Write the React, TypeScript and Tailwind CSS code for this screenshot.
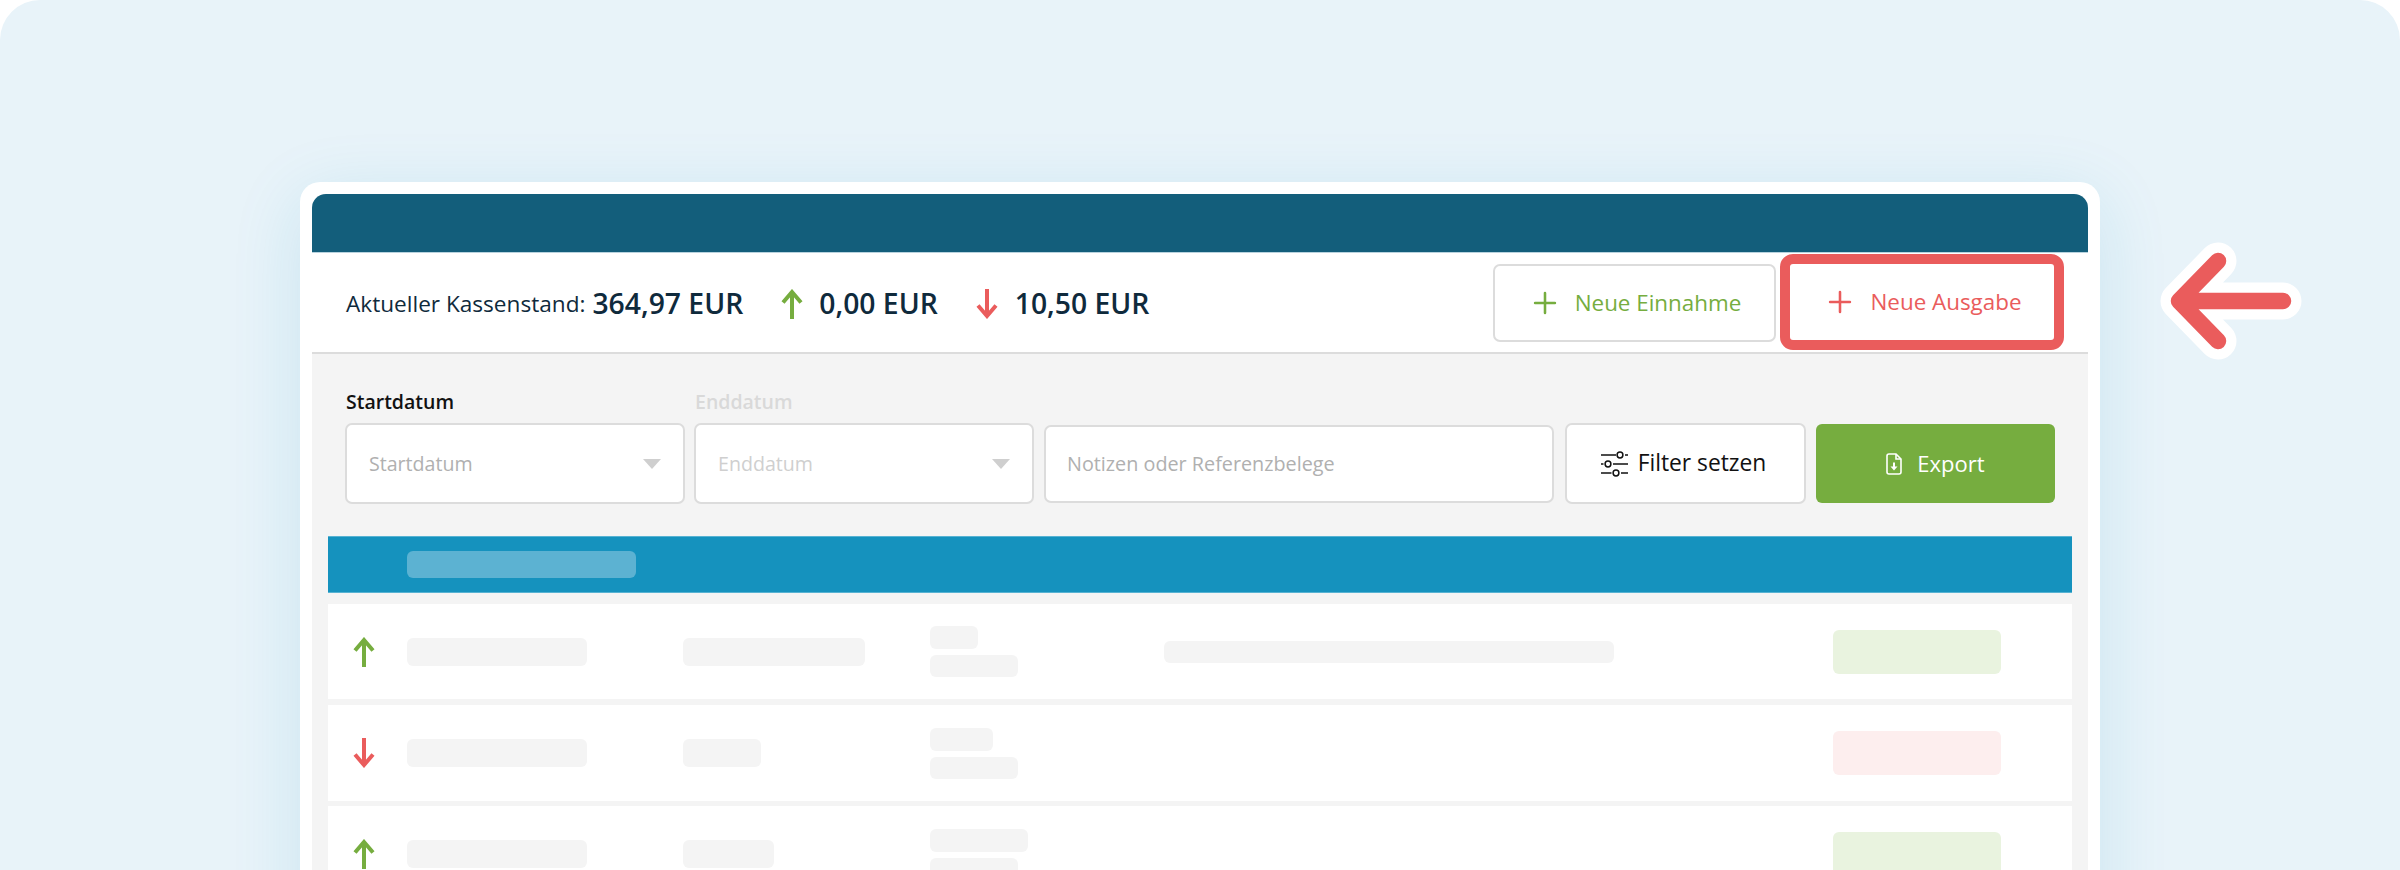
import { Plus } from "lucide-react";

const font = "font-['Open_Sans',sans-serif]";

const rows = [
  { dir: "up", height: "h-[95px] mb-[1px]", second: "w-[182px]", first: "w-[48px]", note: true, amount: "bg-[#e9f3df]" },
  { dir: "down", height: "h-[96px]", second: "w-[78px]", first: "w-[63px]", note: false, amount: "bg-[#fdeeee]" },
  { dir: "up", height: "h-[96px]", second: "w-[91px]", first: "w-[98px]", note: false, amount: "bg-[#e9f3df]" },
];

function Move({ dir, className }: { dir: string; className?: string }) {
  return (
    <svg
      width="22"
      height="30"
      viewBox="0 0 22 30"
      fill="none"
      stroke={dir === "up" ? "#76ad3f" : "#ea5c5c"}
      strokeWidth="4"
      className={className}
    >
      {dir === "up" ? <path d="M11 30V3M2 13.5L11 3L20 13.5" /> : <path d="M11 0V27M2 16.5L11 27L20 16.5" />}
    </svg>
  );
}

function FilterIcon() {
  return (
    <svg width="29" height="26" viewBox="0 0 29 26" fill="none" stroke="#111" strokeWidth="1.5" className="mr-[9px]">
      <path d="M1 4h15M25 4h3M1 13h2.500M13 13h15M1 22h10.500M21 22h7" />
      <circle cx="20" cy="4" r="2.900" />
      <circle cx="8" cy="13" r="2.900" />
      <circle cx="16" cy="22" r="2.900" />
    </svg>
  );
}

function ExportIcon() {
  return (
    <svg width="16" height="22" viewBox="0 0 16 22" fill="none" stroke="#fff" strokeWidth="1.600" className="mr-[15px]">
      <path d="M3 1h7l5 5v13a2 2 0 0 1-2 2H3a2 2 0 0 1-2-2V3a2 2 0 0 1 2-2z" />
      <path d="M10 1v5h5" />
      <path d="M8 9.500v6" strokeWidth="2" />
      <path d="M4.500 13.500h7L8 17.500z" fill="#fff" stroke="none" />
    </svg>
  );
}

function Select({ label, muted }: { label: string; muted?: boolean }) {
  return (
    <div className="flex h-[81px] w-[340px] items-center justify-between rounded-[7px] border-2 border-[#dcdcdc] bg-white pl-[22px] pr-[22px]">
      <span className={`text-[19.6px] ${muted ? "text-[#cfcfcf]" : "text-[#b0b0b0]"}`}>{label}</span>
      <span className="h-0 w-0 border-x-[9px] border-t-[10px] border-x-transparent border-t-[#cfcfcf]" />
    </div>
  );
}

function Bone({ className }: { className: string }) {
  return <div className={`rounded-[6px] bg-[#f4f4f4] ${className}`} />;
}

export default function App() {
  return (
    <div className={`h-[870px] w-[2400px] overflow-hidden bg-white ${font}`}>
      <div className="relative h-[910px] w-[2400px] overflow-hidden rounded-[40px] bg-[#e8f3f9] px-[300px] pt-[182px]">
        <div className="w-[1800px] rounded-[20px] bg-white p-[12px] shadow-[0_16px_70px_rgba(21,146,190,0.14)]">
          <div className="h-[59px] rounded-t-[14px] border-b border-[#b9d3de] bg-[#135e7b]" />

          <div className="flex h-[101px] items-center border-b-2 border-[#dcdcdc] pl-[34px] pr-[34px]">
            <span className="mt-[2px] text-[22.6px] text-[#0f2a3c]">Aktueller Kassenstand:</span>
            <span className="ml-[7px] mt-[2px] text-[28.3px] font-[550] text-[#0f2a3c]">364,97 EUR</span>
            <Move dir="up" className="ml-[38px] mt-[2px]" />
            <span className="ml-[16px] mt-[2px] text-[28.3px] font-[550] text-[#0f2a3c]">0,00 EUR</span>
            <Move dir="down" className="ml-[38px] mt-[2px]" />
            <span className="ml-[17px] mt-[2px] text-[28.3px] font-[550] text-[#0f2a3c]">10,50 EUR</span>
            <div className="ml-auto flex gap-[14px]">
              <button className="flex h-[78px] w-[283px] items-center justify-center rounded-[7px] border-2 border-[#dcdcdc] text-[22.4px] text-[#76ad3f]">
                <Plus className="mr-[13px] h-[34px] w-[34px]" strokeWidth={1.8} />
                Neue Einnahme
              </button>
              <button className="flex h-[76px] w-[264px] items-center justify-center rounded-[3px] text-[22.4px] text-[#ea5c5c] outline-[10px] outline-[#ea5c5c]">
                <Plus className="mr-[14px] h-[34px] w-[34px]" strokeWidth={1.8} />
                Neue Ausgabe
              </button>
            </div>
          </div>

          <div className="bg-[#f4f4f4] px-[16px] pb-[400px] pt-[33px]">
            <div className="flex flex-col pl-[17px] pr-[17px]">
              <div className="flex h-[36px] items-start pl-[1px] text-[19.500px] font-[550]">
                <span className="w-[349px] text-[#111]">Startdatum</span>
                <span className="text-[#d9d9d9]">Enddatum</span>
              </div>
              <div className="flex items-center">
                <Select label="Startdatum" />
                <div className="ml-[9px]">
                  <Select label="Enddatum" muted />
                </div>
                <div className="ml-[10px] flex h-[78px] w-[510px] items-center rounded-[7px] border-2 border-[#dcdcdc] bg-white pl-[21px] text-[19.800px] text-[#b0b0b0]">
                  Notizen oder Referenzbelege
                </div>
                <button className="ml-[11px] flex h-[81px] w-[241px] items-center justify-center rounded-[7px] border-2 border-[#dcdcdc] bg-white pr-[5px] text-[22.800px] text-[#111]">
                  <FilterIcon />
                  Filter setzen
                </button>
                <button className="ml-[10px] flex h-[79px] w-[239px] items-center justify-center rounded-[6px] bg-[#76ad3f] text-[22px] text-white">
                  <ExportIcon />
                  Export
                </button>
              </div>
            </div>

            <div className="mt-[32px] flex h-[57px] items-center border-y border-[#57b2d2] bg-[#1592be] pl-[79px]">
              <div className="h-[27px] w-[229px] rounded-[6px] bg-[#5cb2d2]" />
            </div>

            <div className="mt-[11px] flex flex-col gap-[5px]">
              {rows.map((row, i) => (
                <div key={i} className={`flex items-center bg-white ${row.height}`}>
                  <div className="flex w-[79px] justify-center pr-[8px]">
                    <Move dir={row.dir} />
                  </div>
                  <Bone className="h-[28px] w-[180px]" />
                  <div className="ml-[96px] w-[247px]">
                    <Bone className={`h-[28px] ${row.second}`} />
                  </div>
                  <div className="flex w-[234px] flex-col gap-[6px]">
                    <Bone className={`h-[23px] ${row.first}`} />
                    <Bone className="h-[22px] w-[88px]" />
                  </div>
                  <div className="w-[669px]">{row.note && <Bone className="h-[22px] w-[450px]" />}</div>
                  <div className={`h-[44px] w-[168px] rounded-[6px] ${row.amount}`} />
                </div>
              ))}
            </div>
          </div>
        </div>

        {/* pointer next to the highlighted button */}
        <svg className="absolute left-[2150px] top-[230px]" width="170" height="140" viewBox="2150 230 170 140" fill="none" strokeLinecap="round" strokeLinejoin="round">
          <path d="M2218 261L2179 301L2218 341M2179 301H2283" stroke="#fff" strokeWidth="37" />
          <path d="M2218 261L2179 301L2218 341M2179 301H2283" stroke="#ea5c5c" strokeWidth="16.5" />
        </svg>
      </div>
    </div>
  );
}
